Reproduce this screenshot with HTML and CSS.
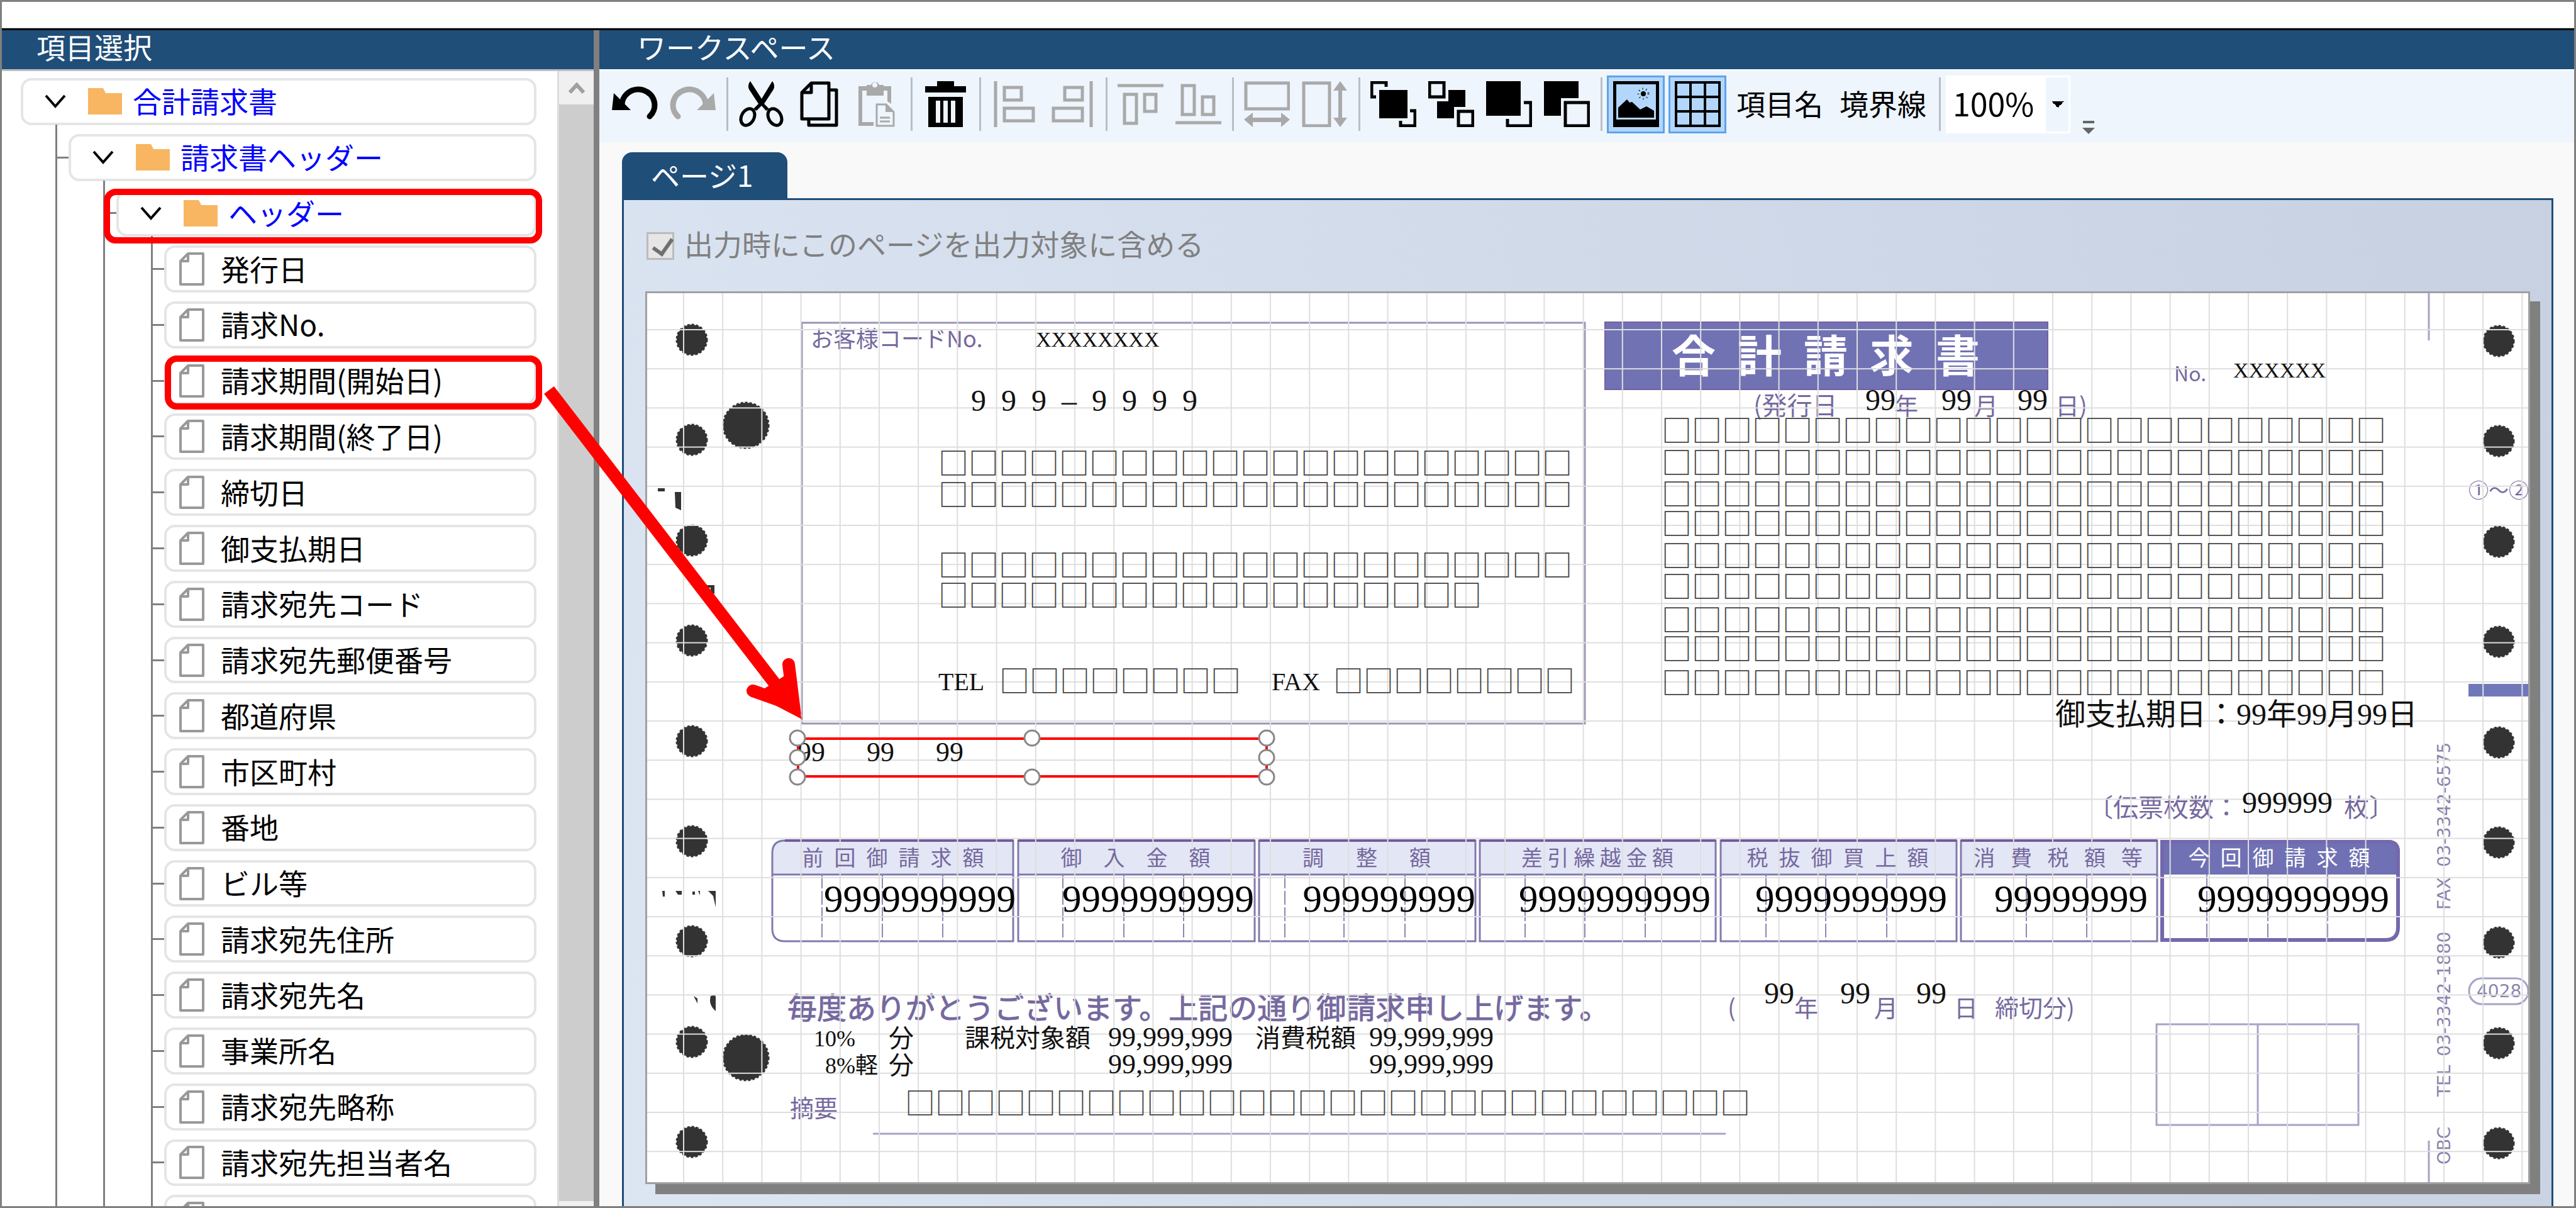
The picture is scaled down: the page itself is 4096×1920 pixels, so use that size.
FILE: index.html
```html
<!DOCTYPE html>
<html lang="ja">
<head>
<meta charset="UTF-8">
<meta name="viewport" content="width=device-width, initial-scale=1.0">
<title>合計請求書</title>
<link rel="stylesheet" href="styles.css">
</head>
<body>

<div class="window">
    <div class="blank"></div>
    <div class="main">

        <div class="sidebar">
            <h2 class="title">項目選択</h2>
            <div class="sidebar-body">
                <ul class="tree" id="tree">
                    <!-- 項目は下のスクリプトで追加 -->
                </ul>
                <div class="scrollbar">
                    <button class="scroll-up" aria-label="上へ">
                        <svg width="26" height="20" viewBox="0 0 26 20"><path d="M2 17 L13 5 L24 17" fill="none" stroke="#a0a0a0" stroke-width="6"/></svg>
                    </button>
                    <div class="scroll-end"></div>
                </div>
            </div>
        </div>

        <div class="splitter"></div>

        <div class="workspace">
            <h2 class="title">ワークスペース</h2>
            <div class="toolbar">
                <button class="tool" aria-label="元に戻す">
                    <svg viewBox="0 0 73 73"><path d="M16 40 A26 25 0 1 1 60 56" fill="none" stroke="#000" stroke-width="9" stroke-linecap="round"/><path d="M3 19 L13 29 L30 46 H0 Z"/></svg>
                </button>
                <button class="tool off" aria-label="やり直し">
                    <svg viewBox="0 0 73 73"><path d="M57 40 A26 25 0 1 0 13 56" fill="none" stroke="#a9a9a9" stroke-width="9" stroke-linecap="round"/><path d="M70 19 L60 29 L43 46 H73 Z"/></svg>
                </button>
                <div class="sep"></div>
                <button class="tool" aria-label="切り取り">
                    <svg viewBox="0 0 73 73"><path d="M19 0 Q14 6 17 13 L32 36 L24 44 L29 47 L37 39 L44 47 L49 44 L41 36 L56 13 Q59 6 54 0 L37 28 Z"/><g fill="none" stroke="#000" stroke-width="5"><ellipse cx="15" cy="57" rx="10" ry="14" transform="rotate(28 15 57)"/><ellipse cx="58" cy="57" rx="10" ry="14" transform="rotate(-28 58 57)"/></g></svg>
                </button>
                <button class="tool" aria-label="コピー">
                    <svg viewBox="0 0 73 73"><g fill="none" stroke="#000" stroke-width="5" stroke-linejoin="round"><path d="M9 18 L24 3 H52 V60 H9 Z"/><path d="M9 18 H24 V3"/><path d="M52 14 H64 V70 H20 V60"/></g></svg>
                </button>
                <button class="tool off" aria-label="貼り付け">
                    <svg viewBox="0 0 73 73"><path d="M7 8 H20 V22 H47 V8 H59 V36 L53 32 V15 H13 V65 H31 V71 H7 Z"/><path d="M20 6 H27 A7 7 0 0 1 40 6 H47 V23 H20 Z M29 6 a4 4 0 0 0 8 0 a4 4 0 0 0 -8 0" fill-rule="evenodd"/><path d="M50 37 V49 H63 Z"/><g fill="none" stroke="#a9a9a9" stroke-width="3"><path d="M36 37 H51 L63 49 V71 H36 Z"/><path d="M41 58 H57 M41 64 H57"/></g></svg>
                </button>
                <div class="sep"></div>
                <button class="tool" aria-label="削除">
                    <svg viewBox="0 0 73 73"><path d="M23 0 H50 V8 H69 V18 H4 V8 H23 Z"/><path fill-rule="evenodd" d="M9 25 H64 V73 H9 Z M21 31 V66 H28 V31 Z M33 31 V66 H40 V31 Z M45 31 V66 H52 V31 Z"/></svg>
                </button>
                <div class="sep"></div>
                <button class="tool off" aria-label="左揃え">
                    <svg viewBox="0 0 73 73"><g fill="none" stroke="#a9a9a9" stroke-width="5"><path d="M7 0 V73"/><rect x="21" y="10" width="27" height="20"/><rect x="21" y="43" width="46" height="20"/></g></svg>
                </button>
                <button class="tool off" aria-label="右揃え">
                    <svg viewBox="0 0 73 73"><g fill="none" stroke="#a9a9a9" stroke-width="5"><path d="M67 0 V73"/><rect x="25" y="10" width="28" height="20"/><rect x="7" y="43" width="46" height="20"/></g></svg>
                </button>
                <div class="sep"></div>
                <button class="tool off" aria-label="上揃え">
                    <svg viewBox="0 0 73 73"><g fill="none" stroke="#a9a9a9" stroke-width="5"><path d="M0 7 H73"/><rect x="11" y="21" width="19" height="46"/><rect x="43" y="21" width="18" height="27"/></g></svg>
                </button>
                <button class="tool off" aria-label="下揃え">
                    <svg viewBox="0 0 73 73"><g fill="none" stroke="#a9a9a9" stroke-width="5"><path d="M0 66 H73"/><rect x="11" y="7" width="19" height="46"/><rect x="43" y="25" width="18" height="28"/></g></svg>
                </button>
                <div class="sep"></div>
                <button class="tool off" aria-label="幅を揃える">
                    <svg viewBox="0 0 73 73"><rect x="3" y="3" width="68" height="41" fill="none" stroke="#a9a9a9" stroke-width="5"/><path d="M0 61 L14 50 V58 H59 V50 L73 61 L59 73 V65 H14 V73 Z"/></svg>
                </button>
                <button class="tool off" aria-label="高さを揃える">
                    <svg viewBox="0 0 73 73"><rect x="3" y="3" width="41" height="68" fill="none" stroke="#a9a9a9" stroke-width="5"/><path d="M61 0 L50 15 H58 V58 H50 L61 73 L72 58 H64 V15 H72 Z"/></svg>
                </button>
                <div class="sep"></div>
                <button class="tool" aria-label="前面へ">
                    <svg viewBox="0 0 73 73"><rect x="14" y="14" width="45" height="45"/><g fill="none" stroke="#000" stroke-width="5"><path d="M9 25 H2 V2 H25 V9"/><path d="M63 47 H71 V71 H48 V63"/></g></svg>
                </button>
                <button class="tool" aria-label="一つ前面へ">
                    <svg viewBox="0 0 73 73"><path d="M32 14 H59 V41 H41 V59 H14 V32 H32 Z"/><g fill="none" stroke="#000" stroke-width="5"><rect x="2" y="2" width="23" height="23"/><rect x="48" y="48" width="23" height="23"/></g></svg>
                </button>
                <button class="tool" aria-label="一つ背面へ">
                    <svg viewBox="0 0 73 73"><rect width="55" height="55"/><path d="M60 34 H71 V71 H34 V60" fill="none" stroke="#000" stroke-width="5"/></svg>
                </button>
                <button class="tool" aria-label="背面へ">
                    <svg viewBox="0 0 73 73"><path d="M0 0 H55 V27 H27 V55 H0 Z"/><rect x="34" y="34" width="37" height="37" fill="none" stroke="#000" stroke-width="5"/></svg>
                </button>
                <div class="sep"></div>
                <button class="tool on" aria-label="背景画像" aria-pressed="true">
                    <svg viewBox="0 0 73 73"><path fill-rule="evenodd" d="M0 0 H73 V73 H0 Z M5 5 V61 H68 V5 Z"/><path d="M8 58 V42 L22 29 L26 34 L30 33 L43 45 L53 40 L65 47 V58 Z"/><circle cx="48" cy="20" r="4"/><circle cx="48" cy="20" r="8" fill="none" stroke="#000" stroke-width="3" stroke-dasharray="1 5"/></svg>
                </button>
                <button class="tool on" aria-label="グリッド" aria-pressed="true">
                    <svg viewBox="0 0 73 73"><path d="M2 2 H71 V71 H2 Z M25 2 V71 M48 2 V71 M2 25 H71 M2 48 H71" fill="none" stroke="#000" stroke-width="4"/></svg>
                </button>
                <button class="text-tool">項目名</button>
                <button class="text-tool">境界線</button>
                <div class="sep"></div>
                <select class="zoom" aria-label="表示倍率">
                    <option>100%</option>
                </select>
                <button class="more" aria-label="その他">
                    <svg width="20" height="22" viewBox="0 0 20 22"><path d="M1 0 H19 V4 H1 Z M0 11 H20 L10 21 Z" fill="#666"/></svg>
                </button>
            </div>

            <div class="pages">
                <button class="tab">ページ1</button>
                <div class="page-panel">
                    <div class="include">
                        <input type="checkbox" id="include" checked disabled>
                        <label for="include">出力時にこのページを出力対象に含める</label>
                    </div>
                    <div class="paper">
                        <svg class="form" viewBox="1029 466 2991 1413" preserveAspectRatio="xMinYMin meet">
                            <defs>
                                <pattern id="grid" x="1086" y="523" width="62.2" height="62.2" patternUnits="userSpaceOnUse">
                                    <path d="M0 1 H62.2 M1 0 V62.2" stroke="#dedede" stroke-width="2" fill="none"/>
                                </pattern>
                            </defs>

                            <!-- 用紙の穴 -->
                            <g class="holes" id="holes">
                                <circle cx="1186" cy="676" r="36"/>
                                <circle cx="1186" cy="1681" r="36"/>
                            </g>
                            <g fill="#333">
                                <path d="M1046 776 h11 v5 h-11 z M1073 782 h10 v29 l-9 -4 z M1104 930 h32 v14 l-6 -2 v-8 h-26 z"/>
                                <path d="M1053 1416 h4 v9 h-3 z M1074 1416 h10 v6 h-6 z M1101 1417 h4 v5 h-4 z M1110 1416 h3 v7 z M1126 1416 h12 v26 l-4 -18 z"/>
                                <path d="M1130 1583 q8 -4 8 2 v22 q-12 -10 -8 -24 z M1103 1583 l6 4 v8 z"/>
                            </g>

                            <!-- 枠線 -->
                            <rect x="1275" y="513" width="1245" height="637" class="rule"/>
                            <rect x="2552" y="512" width="704" height="107" fill="#7172b4" stroke="#75609f" stroke-width="2"/>
                            <rect x="3925" y="1087" width="96" height="20" fill="#7078ba"/>
                            <path d="M3862 466 V541 M3862 1813 V1879" class="thin"/>
                            <rect x="3429" y="1628" width="321" height="160" class="thin"/>
                            <path d="M3590 1628 V1788 M1388 1802 H2744" class="thin"/>
                            <rect x="3926" y="1555" width="94" height="41" rx="20" class="thin"/>

                            <!-- 金額欄 -->
                            <g class="cells">
                                <path class="head" d="M1611 1336 H1248 Q1228 1336 1228 1356 V1390 H1611 Z"/>
                                <path class="head" d="M1619 1336 H1995 V1390 H1619 Z M2002 1336 H2346 V1390 H2002 Z M2353 1336 H2728 V1390 H2353 Z M2736 1336 H3111 V1390 H2736 Z M3118 1336 H3430 V1390 H3118 Z"/>
                                <path d="M1228 1390 V1476 Q1228 1496 1248 1496 H1611 V1390 M1619 1390 V1496 H1995 V1390 M2002 1390 V1496 H2346 V1390 M2353 1390 V1496 H2728 V1390 M2736 1390 V1496 H3111 V1390 M3118 1390 V1496 H3430 V1390"/>
                                <path class="top" d="M1248 1336 H1611 M1619 1336 H1995 M2002 1336 H2346 M2353 1336 H2728 M2736 1336 H3111 M3118 1336 H3430"/>
                            </g>
                            <path d="M3435 1335 H3797 Q3816 1335 3816 1354 V1390 H3435 Z" fill="#7071b4"/>
                            <path d="M3438 1338 V1494 H3793 Q3813 1494 3813 1474 V1354 Q3813 1338 3797 1338 Z" fill="none" stroke="#7468ad" stroke-width="6"/>
                            <path class="dashes" d="M1307 1390 V1496 M1403 1390 V1496 M1499 1390 V1496 M1690 1390 V1496 M1787 1390 V1496 M1882 1390 V1496 M2043 1390 V1496 M2137 1390 V1496 M2234 1390 V1496 M2425 1390 V1496 M2520 1390 V1496 M2616 1390 V1496 M2808 1390 V1496 M2903 1390 V1496 M3000 1390 V1496 M3222 1390 V1496 M3318 1390 V1496 M3509 1390 V1492 M3606 1390 V1492 M3701 1390 V1492"/>

                            <!-- 用紙に印刷済みの文字 -->
                            <g class="printed">
                                <text x="1289" y="552" class="s36">お客様コードNo.</text>
                                <text x="2658" y="592" class="heading">合&ensp;計&ensp;請&ensp;求&ensp;書</text>
                                <text x="2788" y="659" class="s40">(発行日</text>
                                <text x="3012" y="659">年</text>
                                <text x="3139" y="659">月</text>
                                <text x="3268" y="659">日)</text>
                                <text x="3457" y="606" class="s32">No.</text>
                                <text x="3925" y="791" class="s32">①〜②</text>
                                <text x="3320" y="1298" class="s40">〔伝票枚数：</text>
                                <text x="3727" y="1298" class="s40">枚〕</text>
                                <text x="1252" y="1619" class="message">毎度ありがとうございます。上記の通り御請求申し上げます。</text>
                                <text x="2747" y="1616">(</text>
                                <text x="2853" y="1616">年</text>
                                <text x="2980" y="1616">月</text>
                                <text x="3107" y="1616">日</text>
                                <text x="3172" y="1616">締切分)</text>
                                <text x="1256" y="1775">摘要</text>
                                <text x="3938" y="1585" class="small">4028</text>
                                <g class="small">
                                    <text transform="translate(3896 1851) rotate(-90)">OBC</text>
                                    <text transform="translate(3896 1743) rotate(-90)">TEL</text>
                                    <text transform="translate(3896 1679) rotate(-90)">03-3342-1880</text>
                                    <text transform="translate(3896 1446) rotate(-90)">FAX</text>
                                    <text transform="translate(3896 1378) rotate(-90)">03-3342-6575</text>
                                </g>
                            </g>

                            <rect x="1029" y="466" width="2991" height="1413" fill="url(#grid)"/>

                            <!-- 配置された項目 -->
                            <g class="fields">
                                <text x="1647" y="551" class="s34">XXXXXXXX</text>
                                <text x="1544" y="653">9&ensp;9&ensp;9&ensp;–&ensp;9&ensp;9&ensp;9&ensp;9</text>
                                <g id="boxes"></g>
                                <text x="1492" y="1097" class="s40">TEL</text>
                                <text x="2022" y="1097" class="s40">FAX</text>
                                <text x="3551" y="600" class="s34">XXXXXX</text>
                                <text x="2966" y="652">99</text>
                                <text x="3087" y="652">99</text>
                                <text x="3208" y="652">99</text>
                                <text x="3268" y="1152">御支払期日：99年99月99日</text>
                                <text x="3565" y="1292">999999</text>
                                <text x="1268" y="1210" class="s44">99&ensp;&ensp;&ensp;99&ensp;&ensp;&ensp;99</text>
                                <text x="2805" y="1595">99</text>
                                <text x="2926" y="1595">99</text>
                                <text x="3047" y="1595">99</text>
                                <text x="1294" y="1663" class="s36">10%</text>
                                <text x="1413" y="1664" class="s40">分</text>
                                <text x="1534" y="1664" class="s40">課税対象額</text>
                                <text x="1762" y="1663" class="s44">99,999,999</text>
                                <text x="1996" y="1664" class="s40">消費税額</text>
                                <text x="2177" y="1663" class="s44">99,999,999</text>
                                <text x="1312" y="1706" class="s36">8%軽</text>
                                <text x="1413" y="1707" class="s40">分</text>
                                <text x="1762" y="1706" class="s44">99,999,999</text>
                                <text x="2177" y="1706" class="s44">99,999,999</text>
                            </g>

                            <foreignObject x="1227" y="1334" width="2590" height="163">
                                <table class="amounts">
                                    <thead>
                                        <tr>
                                            <th>前&ensp;回&ensp;御&ensp;請&ensp;求&ensp;額</th>
                                            <th>御　入　金　額</th>
                                            <th>調　&ensp;整　&ensp;額</th>
                                            <th>差 引 繰 越 金 額</th>
                                            <th>税&ensp;抜&ensp;御&ensp;買&ensp;上&ensp;額</th>
                                            <th>消&ensp; 費&ensp; 税&ensp; 額&ensp; 等</th>
                                            <th class="total">今&ensp;回&ensp;御&ensp;請&ensp;求&ensp;額</th>
                                        </tr>
                                    </thead>
                                    <tbody>
                                        <tr>
                                            <td>9999999999</td>
                                            <td>9999999999</td>
                                            <td>999999999</td>
                                            <td>9999999999</td>
                                            <td>9999999999</td>
                                            <td>99999999</td>
                                            <td>9999999999</td>
                                        </tr>
                                    </tbody>
                                </table>
                            </foreignObject>

                            <!-- 選択中の項目 -->
                            <rect x="1269" y="1174" width="745" height="60" fill="none" stroke="#f00" stroke-width="4"/>
                            <g fill="#fff" stroke="#888" stroke-width="3">
                                <circle cx="1268" cy="1173" r="12"/><circle cx="1641" cy="1173" r="12"/><circle cx="2014" cy="1173" r="12"/>
                                <circle cx="1268" cy="1204" r="12"/><circle cx="2014" cy="1204" r="12"/>
                                <circle cx="1268" cy="1235" r="12"/><circle cx="1641" cy="1235" r="12"/><circle cx="2014" cy="1235" r="12"/>
                            </g>
                        </svg>
                    </div>
                </div>
            </div>
        </div>
    </div>

    <svg class="guide" viewBox="0 0 4096 1920" preserveAspectRatio="xMinYMin meet">
        <g fill="none" stroke="#f00">
            <rect x="170" y="305" width="687" height="77" rx="14" stroke-width="10"/>
            <rect x="267" y="570" width="590" height="76" rx="14" stroke-width="10"/>
            <path d="M873 620 L1261 1124" stroke-width="20"/>
            <path d="M1254 1056 L1262 1121 L1197 1098" stroke-width="20" stroke-linecap="round" stroke-miterlimit="10"/>
        </g>
        <path d="M1254 1070 L1275 1143 L1200 1104 Z" fill="#f00"/>
    </svg>
</div>

<script>
const items = [
    [1, '合計請求書'],
    [2, '請求書ヘッダー'],
    [3, 'ヘッダー'],
    [4, '発行日'],
    [4, '請求No.'],
    [4, '請求期間(開始日)'],
    [4, '請求期間(終了日)'],
    [4, '締切日'],
    [4, '御支払期日'],
    [4, '請求宛先コード'],
    [4, '請求宛先郵便番号'],
    [4, '都道府県'],
    [4, '市区町村'],
    [4, '番地'],
    [4, 'ビル等'],
    [4, '請求宛先住所'],
    [4, '請求宛先名'],
    [4, '事業所名'],
    [4, '請求宛先略称'],
    [4, '請求宛先担当者名'],
    [4, '']
];

const folderIcon = `
    <svg class="chevron" width="34" height="22" viewBox="0 0 34 22"><path d="M2 2 L17 19 L32 2" fill="none" stroke="#000" stroke-width="4"/></svg>
    <svg class="folder" width="54" height="42" viewBox="0 0 54 42"><path d="M0 0 H24 L28 8 H54 V42 H0 Z" fill="#f8b662"/></svg>`;
const fileIcon = `
    <svg class="file" width="40" height="53" viewBox="0 0 40 53"><path d="M2 14 L14 2 H38 V51 H2 Z M2 14 H14 V2" fill="none" stroke="#999" stroke-width="4" stroke-linejoin="round"/></svg>`;

document.getElementById('tree').innerHTML = items.map(([level, name]) => `
    <li class="level${level}">
        <button class="item">${level < 4 ? folderIcon : fileIcon}<span>${name}</span></button>
    </li>`).join('');

// 左右の送り穴
let holes = '';
for (let i = 0; i < 9; i++) {
    const y = 540 + Math.round(i * 159.4);
    holes += `<circle cx="1100" cy="${y}" r="24"/><circle cx="3973" cy="${y + 2}" r="24"/>`;
}
document.getElementById('holes').innerHTML += holes;

// □の項目: x, 中心y, 文字数
const boxes = [
    [1497, 736, 21], [1497, 786, 21], [1497, 898, 21], [1497, 946, 18],
    [1594, 1082, 8], [2125, 1082, 8],
    [2647, 684, 24], [2647, 735, 24], [2647, 785, 24], [2647, 832, 24], [2647, 883, 24],
    [2647, 932, 24], [2647, 985, 24], [2647, 1031, 24], [2647, 1085, 24],
    [1444, 1753, 28]
];
document.getElementById('boxes').innerHTML = boxes.map(([x, y, n]) =>
    `<text x="${x - 5}" y="${y + 18}" class="box">${'□'.repeat(n)}</text>`).join('');
</script>

</body>
</html>
```
FILE: styles.css
```css
* {
    box-sizing: border-box;
}
body {
    margin: 0;
    font-family: "Noto Sans CJK JP", sans-serif;
    font-size: 46px;
    line-height: 1;
    color: #000;
}
button, select {
    margin: 0;
    padding: 0;
    border: 0;
    background: none;
    font: inherit;
    color: inherit;
}
svg {
    display: block;
    flex: none;
}
.window {
    position: relative;
    display: flex;
    flex-direction: column;
    height: 100vh;
    border: 3px solid #808080;
    background: #fff;
    overflow: hidden;
}
.blank {
    height: 42px;
    flex: none;
    border-bottom: 1px solid #ccc;
}
.main {
    display: flex;
    flex: 1;
    min-height: 0;
    border-top: 3px solid #000;
}
.title {
    height: 62px;
    flex: none;
    margin: 0;
    padding-left: 55px;
    background: #1f4e79;
    color: #fff;
    font-size: 46px;
    font-weight: normal;
    line-height: 50px;
}

/* 項目選択 */
.sidebar {
    display: flex;
    flex-direction: column;
    width: 941px;
    flex: none;
}
.sidebar-body {
    display: flex;
    flex: 1;
    min-height: 0;
    border-top: 3px solid #bfbfbf;
}
.tree {
    display: flex;
    flex-direction: column;
    flex: 1;
    margin: 0 0 -64px;
    padding: 4px 33px 0 30px;
    list-style: none;
}
.tree li {
    position: relative;
    display: flex;
    flex: 1;
    min-height: 0;
    padding: 7px 0;
}
.tree .level2 { padding-left: 76px; }
.tree .level3 { padding-left: 152px; }
.tree .level4 { padding-left: 228px; }
.tree li::before {
    content: "";
    position: absolute;
    top: -8px;
    bottom: 0;
    left: 55px;
    width: 0;
    background: repeating-linear-gradient(to right, #808080 0 3px, transparent 3px 76px);
}
.tree .level2::before { width: 3px; }
.tree .level3::before { width: 79px; }
.tree .level4::before { width: 155px; }
.item {
    position: relative;
    display: flex;
    align-items: center;
    flex: 1;
    border: 4px solid #e5e5e5;
    border-radius: 17px;
    background: #fff;
    white-space: nowrap;
}
.item span {
    padding-bottom: 4px;
}
.level1 .item, .level2 .item, .level3 .item {
    padding-left: 34px;
    color: #00f;
}
.level4 .item {
    padding-left: 20px;
}
li:not(.level1) .item::before {
    content: "";
    position: absolute;
    left: -22px;
    width: 18px;
    height: 3px;
    background: #808080;
}
.folder {
    margin: 0 17px 0 35px;
}
.file {
    margin-right: 26px;
}
.scrollbar {
    display: flex;
    flex-direction: column;
    justify-content: space-between;
    width: 58px;
    border-left: 3px solid #ddd;
    background: #cdcdcd;
}
.scroll-up {
    display: flex;
    align-items: center;
    justify-content: center;
    height: 53px;
    background: #f0f0f0;
}
.scroll-end {
    height: 8px;
    background: #f0f0f0;
}
.splitter {
    width: 9px;
    flex: none;
    background: #808080;
}

/* ワークスペース */
.workspace {
    display: flex;
    flex-direction: column;
    flex: 1;
    min-width: 0;
    background: #f9f9f9;
}
.workspace .title {
    padding-left: 60px;
}
.toolbar {
    display: flex;
    align-items: center;
    height: 116px;
    flex: none;
    padding: 0 10px 8px;
    border-top: 3px solid #fff;
    background: #eef5fd;
}
.tool {
    display: flex;
    align-items: center;
    justify-content: center;
    width: 92px;
    height: 92px;
    flex: none;
}
.tool svg {
    width: 73px;
    height: 73px;
}
.tool.off svg {
    fill: #a9a9a9;
}
.tool.on {
    margin-left: 6px;
    border: 3px solid #5fa3ea;
    background: #b3d7fc;
}
.sep {
    width: 3px;
    height: 85px;
    margin: 0 6px 0 8px;
    background: #b9bec5;
}
.sep + .tool.on {
    margin-left: 1px;
}
.text-tool {
    margin-left: 16px;
    padding-bottom: 6px;
}
.text-tool + .text-tool {
    margin: 0 12px 0 26px;
}
.zoom {
    width: 198px;
    height: 92px;
    margin-left: 2px;
    padding: 0 0 6px 8px;
    appearance: none;
    border: 3px solid #fff;
    border-radius: 0;
    background:
        linear-gradient(to bottom right, #000 50%, transparent 50%) 175px 38px / 10px 10px no-repeat,
        linear-gradient(to bottom left, #000 50%, transparent 50%) 165px 38px / 10px 10px no-repeat,
        linear-gradient(#eef5fd, #eef5fd) right / 36px 100% no-repeat,
        #fff;
    font-size: 50px;
}
.more {
    align-self: flex-end;
    margin: 0 0 4px 19px;
}
.pages {
    display: flex;
    flex-direction: column;
    align-items: flex-start;
    flex: 1;
    min-height: 0;
    padding: 16px 33px 0 36px;
}
.tab {
    width: 263px;
    height: 73px;
    flex: none;
    padding: 0 0 4px 46px;
    border-radius: 16px 16px 0 0;
    background: #1f4e79;
    color: #fff;
    text-align: left;
}
.page-panel {
    display: flex;
    flex-direction: column;
    align-self: stretch;
    flex: 1;
    min-height: 0;
    padding: 51px 34px 35px;
    border: 3px solid #1f4e79;
    border-bottom: 0;
    background: linear-gradient(75deg, #dce5f2, #c7d1e2);
}
.include {
    display: flex;
    align-items: center;
    height: 44px;
    flex: none;
    margin-bottom: 50px;
    color: #808080;
}
.include label {
    padding-bottom: 10px;
}
.include input {
    width: 44px;
    height: 44px;
    margin: 0 16px 0 2px;
    appearance: none;
    border: 3px solid #bbb;
    background: #e6e6e6;
}
.include input::before {
    content: "";
    display: block;
    width: 14px;
    height: 26px;
    margin: 1px 0 0 13px;
    border: solid #707070;
    border-width: 0 6px 6px 0;
    transform: rotate(35deg);
}
.paper {
    flex: 1;
    min-height: 0;
    border: 3px solid #a0a0a0;
    background: #fff;
    box-shadow: 16px 16px 0 #808080;
}

/* 請求書フォーム */
.form {
    width: 100%;
    height: 100%;
}
.holes circle {
    fill: #333;
    stroke: #333;
    stroke-width: 3;
    stroke-dasharray: 4 3;
}
.rule {
    fill: none;
    stroke: #9a96b4;
    stroke-width: 3;
}
.thin {
    fill: none;
    stroke: #a5a3c8;
    stroke-width: 3;
}
.cells path {
    fill: none;
    stroke: #817aae;
    stroke-width: 3;
}
.cells .head {
    fill: #e3e6f5;
}
.cells .top {
    stroke: #715c9c;
    stroke-width: 4;
}
.dashes {
    fill: none;
    stroke: #8d88b0;
    stroke-width: 2;
    stroke-dasharray: 22 4;
}
.printed {
    fill: #75699f;
    font-size: 38px;
}
.fields {
    font-family: "Liberation Serif", "Noto Sans CJK JP", serif;
    font-size: 48px;
    fill: #111;
}
.heading {
    font-size: 70px;
    font-weight: bold;
    fill: #fff;
}
.message {
    font-size: 47px;
    stroke: #75699f;
    stroke-width: 1px;
}
.small {
    font-family: "DejaVu Sans", sans-serif;
    font-size: 28px;
    fill: #8a84ad;
}
.s32 { font-size: 32px; }
.s34 { font-size: 34px; }
.s36 { font-size: 36px; }
.s40 { font-size: 40px; }
.s44 { font-size: 44px; }
.box {
    font-family: "Noto Sans CJK JP", sans-serif;
    fill: #444;
}
.amounts {
    width: 100%;
    border-collapse: collapse;
    table-layout: fixed;
}
.amounts th {
    height: 56px;
    padding: 0 2px 0 0;
    color: #75699f;
    font-size: 34px;
    font-weight: normal;
    white-space: nowrap;
}
.amounts .total {
    color: #fff;
}
.amounts th:nth-child(1) { width: 388px; }
.amounts th:nth-child(2) { width: 383px; }
.amounts th:nth-child(3) { width: 352px; }
.amounts th:nth-child(4) { width: 382px; }
.amounts th:nth-child(5) { width: 382px; }
.amounts th:nth-child(6) { width: 319px; }
.amounts td {
    height: 76px;
    padding: 0 4px 0 0;
    font-family: "Liberation Serif", serif;
    font-size: 61px;
    text-align: right;
}
.amounts td:nth-child(1) { padding: 0; }
.amounts td:nth-child(n+4) { padding-right: 12px; }
.amounts td:nth-child(n+5) { padding-right: 18px; }

/* 操作の案内 */
.guide {
    position: absolute;
    top: -3px;
    left: -3px;
    width: 100vw;
    height: 100vh;
    pointer-events: none;
}
```
